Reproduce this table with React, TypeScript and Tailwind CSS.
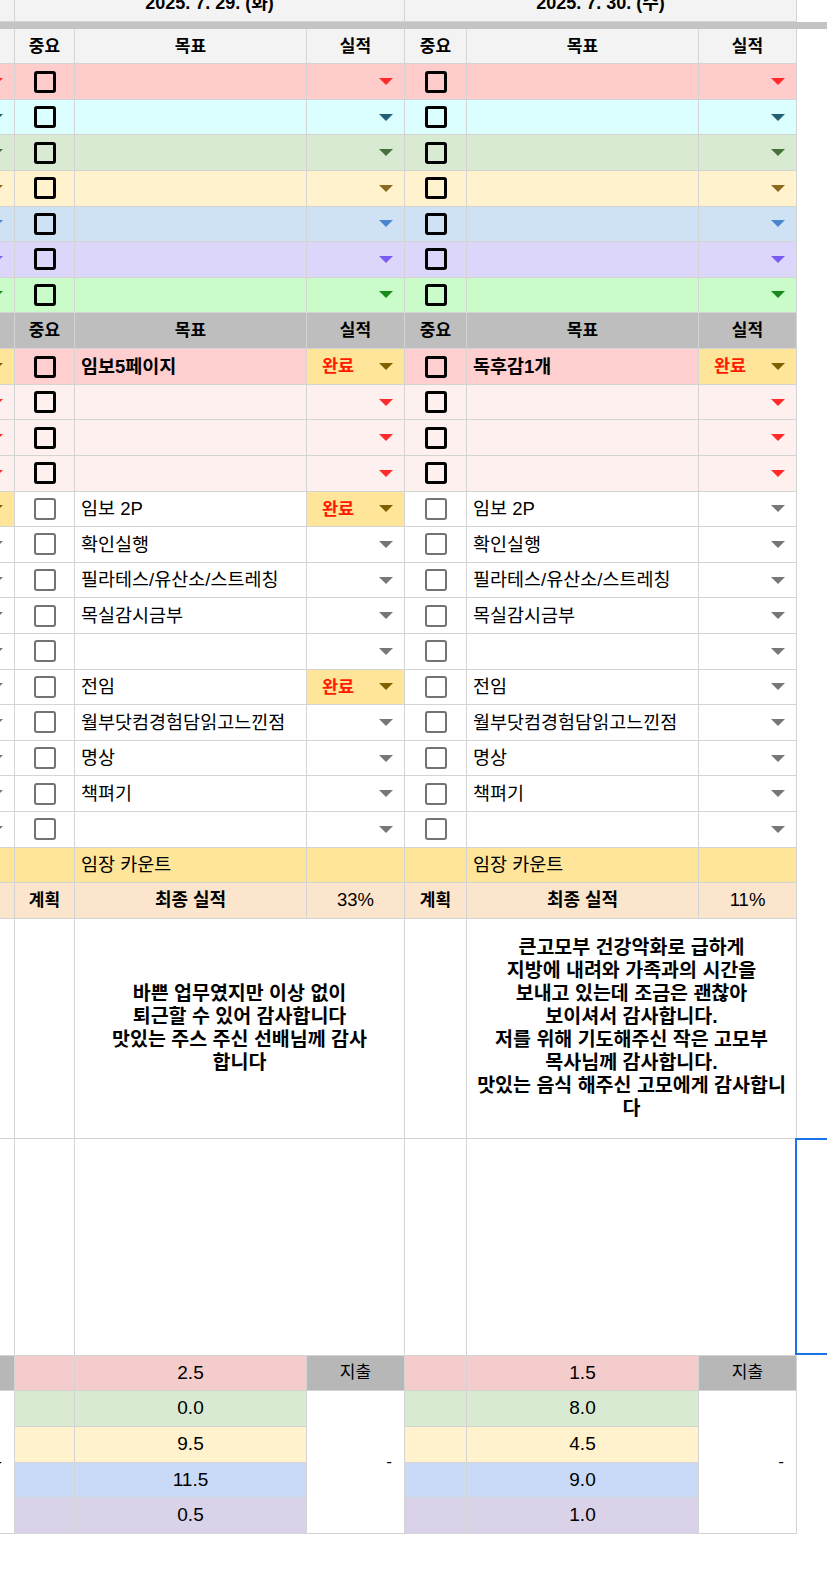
const line = "border-r border-b border-[#d4d4d4]";

const Arrow = ({ cls }: { cls: string }) => (
  <svg width="14" height="7" viewBox="0 0 14 7" className="shrink-0">
    <path d="M0 0h14L7 7z" className={cls} />
  </svg>
);

const Check = ({ dark }: { dark?: boolean }) => (
  <span
    className={
      dark
        ? "block h-[22px] w-[22px] rounded-[3px] border-[3px] border-black"
        : "block h-[22px] w-[22px] rounded-[3px] border-[2.5px] border-[#737373]"
    }
  />
);

type Day = {
  bg: string;
  arrow: string;
  goal?: string;
  bold?: boolean;
  done?: boolean;
  dark?: boolean;
};

const Result = ({ bg, arrow, done }: { bg: string; arrow: string; done?: boolean }) => (
  <div
    className={`${line} ${done ? "bg-[#ffe599]" : bg} flex items-center justify-between pl-[15px] pr-[11px]`}
  >
    <span className="text-[17.5px] font-bold text-[#ff1a00]">{done ? "완료" : ""}</span>
    <Arrow cls={done ? "fill-[#7f6000]" : arrow} />
  </div>
);

const GoalRow = ({ prev, days }: { prev: { bg: string; arrow: string }; days: Day[] }) => (
  <>
    <Result bg={prev.bg} arrow={prev.arrow} />
    {days.map((d, i) => (
      <div key={i} className="contents">
        <div className={`${line} ${d.bg} flex items-center justify-center`}>
          <Check dark={d.dark} />
        </div>
        <div
          className={`${line} ${d.bg} flex items-center pl-[6px] text-[18.5px] whitespace-nowrap ${d.bold ? "font-bold" : ""}`}
        >
          {d.goal}
        </div>
        <Result bg={d.bg} arrow={d.arrow} done={d.done} />
      </div>
    ))}
  </>
);

const topRows = [
  { bg: "bg-[#ffcccc]", arrow: "fill-[#ff2a2a]" },
  { bg: "bg-[#dbfeff]", arrow: "fill-[#245f75]" },
  { bg: "bg-[#d9ead3]", arrow: "fill-[#44703a]" },
  { bg: "bg-[#fff2cc]", arrow: "fill-[#8a6a1e]" },
  { bg: "bg-[#cfe2f3]", arrow: "fill-[#4a86d0]" },
  { bg: "bg-[#ddd6fb]", arrow: "fill-[#7b5cf0]" },
  { bg: "bg-[#c9fcc9]", arrow: "fill-[#1a8a1a]" },
];

const gray = "fill-[#777777]";
const red = "fill-[#ff2a2a]";

const habits: { left: string; right: string; done?: boolean }[] = [
  { left: "임보 2P", right: "임보 2P", done: true },
  { left: "확인실행", right: "확인실행" },
  { left: "필라테스/유산소/스트레칭", right: "필라테스/유산소/스트레칭" },
  { left: "목실감시금부", right: "목실감시금부" },
  { left: "", right: "" },
  { left: "전임", right: "전임", done: true },
  { left: "월부닷컴경험담읽고느낀점", right: "월부닷컴경험담읽고느낀점" },
  { left: "명상", right: "명상" },
  { left: "책펴기", right: "책펴기" },
  { left: "", right: "" },
];

const HeaderRow = ({ bg }: { bg: string }) => (
  <>
    <div className={`${line} ${bg}`} />
    {[0, 1].map((i) => (
      <div key={i} className="contents">
        <div className={`${line} ${bg} flex items-center justify-center font-bold`}>중요</div>
        <div className={`${line} ${bg} flex items-center justify-center font-bold`}>목표</div>
        <div className={`${line} ${bg} flex items-center justify-center font-bold`}>실적</div>
      </div>
    ))}
  </>
);

const bottom = [
  { bg: "bg-[#f4cccc]", a: "2.5", b: "1.5" },
  { bg: "bg-[#d9ead3]", a: "0.0", b: "8.0" },
  { bg: "bg-[#fff2cc]", a: "9.5", b: "4.5" },
  { bg: "bg-[#c9daf8]", a: "11.5", b: "9.0" },
  { bg: "bg-[#d9d2e9]", a: "0.5", b: "1.0" },
];

const ThanksLeft = [
  "바쁜 업무였지만 이상 없이",
  "퇴근할 수 있어 감사합니다",
  "맛있는 주스 주신 선배님께 감사",
  "합니다",
];

const ThanksRight = [
  "큰고모부 건강악화로 급하게",
  "지방에 내려와 가족과의 시간을",
  "보내고 있는데 조금은 괜찮아",
  "보이셔서 감사합니다.",
  "저를 위해 기도해주신 작은 고모부",
  "목사님께 감사합니다.",
  "맛있는 음식 해주신 고모에게 감사합니",
  "다",
];

export default function App() {
  return (
    <div className="relative h-[1592px] w-[827px] overflow-hidden bg-white font-['Liberation_Sans','Noto_Sans_CJK_KR',sans-serif] text-[17px] text-black">
      {/* date header, cut at the top */}
      <div className="-mt-[14px] -ml-[83px] grid h-[35.7px] w-[880px] grid-cols-[98px_60px_232px_98px_62px_232px_98px]">
        <div className={`${line} bg-[#f3f3f3]`} />
        <div className={`${line} col-span-3 flex items-center justify-center bg-[#f3f3f3] text-[18px] font-bold`}>
          2025. 7. 29. (화)
        </div>
        <div className={`${line} col-span-3 flex items-center justify-center bg-[#f3f3f3] text-[18px] font-bold`}>
          2025. 7. 30. (수)
        </div>
      </div>
      <div className="h-[7.6px] w-full bg-[#c4c4c4]" />

      <div className="-ml-[83px] grid w-[880px] grid-cols-[98px_60px_232px_98px_62px_232px_98px] grid-rows-[35px_repeat(7,35.57px)_36px_repeat(14,35.6px)_35.6px_35.4px_220.3px_216.7px_repeat(5,35.7px)]">
        <HeaderRow bg="bg-[#f3f3f3]" />
        {topRows.map((r, i) => (
          <GoalRow
            key={i}
            prev={r}
            days={[
              { bg: r.bg, arrow: r.arrow, dark: true },
              { bg: r.bg, arrow: r.arrow, dark: true },
            ]}
          />
        ))}

        <HeaderRow bg="bg-[#bebebe]" />
        <GoalRow
          prev={{ bg: "bg-[#ffe599]", arrow: "fill-[#7f6000]" }}
          days={[
            { bg: "bg-[#ffcfcf]", arrow: red, goal: "임보5페이지", bold: true, done: true, dark: true },
            { bg: "bg-[#ffcfcf]", arrow: red, goal: "독후감1개", bold: true, done: true, dark: true },
          ]}
        />
        {[0, 1, 2].map((i) => (
          <GoalRow
            key={i}
            prev={{ bg: "bg-[#fff0f0]", arrow: red }}
            days={[
              { bg: "bg-[#fff0f0]", arrow: red, dark: true },
              { bg: "bg-[#fff0f0]", arrow: red, dark: true },
            ]}
          />
        ))}
        {habits.map((h, i) => (
          <GoalRow
            key={i}
            prev={{ bg: i === 0 ? "bg-[#ffe599]" : "bg-white", arrow: i === 0 ? "fill-[#7f6000]" : gray }}
            days={[
              { bg: "bg-white", arrow: gray, goal: h.left, done: h.done },
              { bg: "bg-white", arrow: gray, goal: h.right },
            ]}
          />
        ))}

        {/* count row */}
        <div className={`${line} bg-[#ffe599]`} />
        {[0, 1].map((i) => (
          <div key={i} className="contents">
            <div className={`${line} bg-[#ffe599]`} />
            <div className={`${line} flex items-center bg-[#ffe599] pl-[6px] text-[18.5px]`}>임장 카운트</div>
            <div className={`${line} bg-[#ffe599]`} />
          </div>
        ))}

        {/* plan row */}
        <div className={`${line} bg-[#fce5cd]`} />
        {["33%", "11%"].map((p) => (
          <div key={p} className="contents">
            <div className={`${line} flex items-center justify-center bg-[#fce5cd] font-bold`}>계획</div>
            <div className={`${line} flex items-center justify-center bg-[#fce5cd] text-[18px] font-bold`}>최종 실적</div>
            <div className={`${line} flex items-center justify-center bg-[#fce5cd] text-[18.5px]`}>{p}</div>
          </div>
        ))}

        {/* gratitude row */}
        <div className={line} />
        {[ThanksLeft, ThanksRight].map((lines, i) => (
          <div key={i} className="contents">
            <div className={line} />
            <div className={`${line} col-span-2 flex flex-col items-center justify-center text-center text-[19.5px] leading-[23px] font-bold`}>
              {lines.map((t) => (
                <span key={t} className="whitespace-nowrap">
                  {t}
                </span>
              ))}
            </div>
          </div>
        ))}

        {/* empty notes row */}
        <div className={line} />
        <div className={line} />
        <div className={`${line} col-span-2`} />
        <div className={line} />
        <div className={`${line} col-span-2`} />

        {/* hours / spending */}
        <div className={`${line} bg-[#b7b7b7]`} />
        {bottom.map((r, i) => (
          <div key={i} className="contents">
            {i === 1 && (
              <div className={`${line} row-span-4 flex items-center justify-end pr-[12px]`}>-</div>
            )}
            <div className={`${line} ${r.bg}`} />
            <div className={`${line} ${r.bg} flex items-center justify-center text-[19px]`}>{r.a}</div>
            {i === 0 && (
              <div className={`${line} flex items-center justify-center bg-[#b7b7b7]`}>지출</div>
            )}
            {i === 1 && (
              <div className={`${line} row-span-4 flex items-center justify-end pr-[12px]`}>-</div>
            )}
            <div className={`${line} ${r.bg}`} />
            <div className={`${line} ${r.bg} flex items-center justify-center text-[19px]`}>{r.b}</div>
            {i === 0 && (
              <div className={`${line} flex items-center justify-center bg-[#b7b7b7]`}>지출</div>
            )}
            {i === 1 && (
              <div className={`${line} row-span-4 flex items-center justify-end pr-[12px]`}>-</div>
            )}
          </div>
        ))}
      </div>

      {/* selected cell outline */}
      <div className="absolute top-[1138px] left-[795px] h-[217px] w-[60px] border-2 border-[#1a73e8]" />
    </div>
  );
}
